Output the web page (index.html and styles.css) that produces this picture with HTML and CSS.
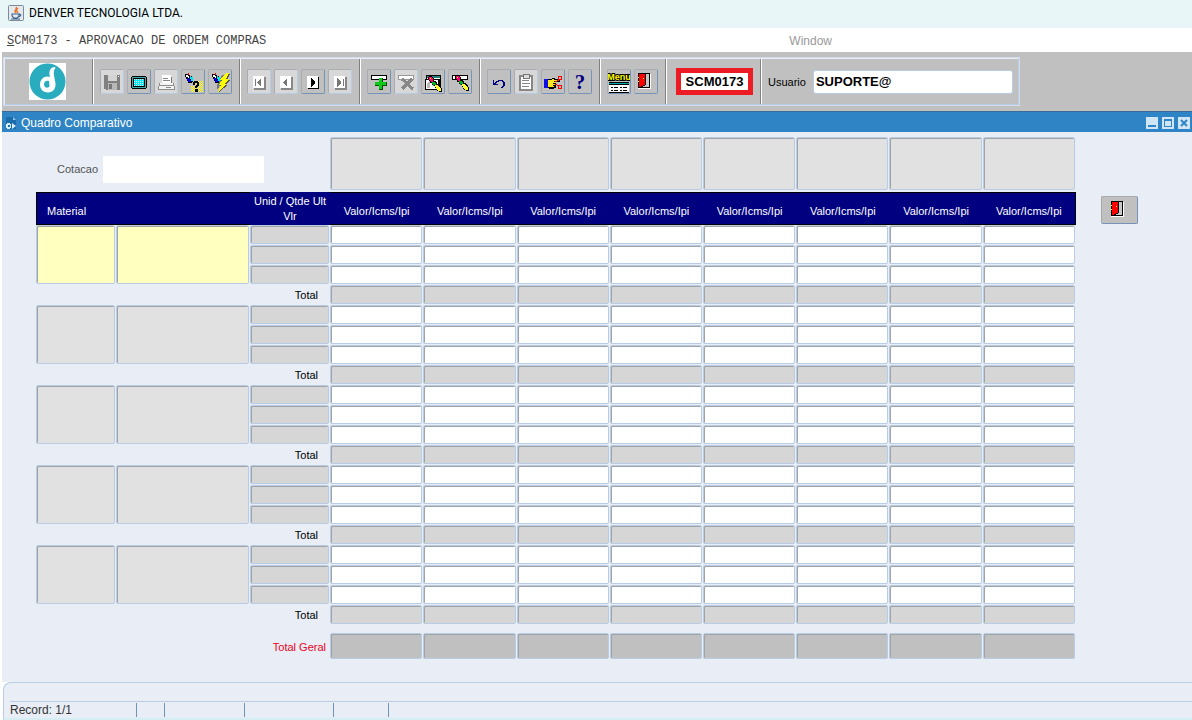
FILE: index.html
```html
<!DOCTYPE html>
<html lang="pt-BR">
<head>
    <meta charset="UTF-8">
    <meta name="viewport" content="width=device-width, initial-scale=1.0">
    <title>DENVER TECNOLOGIA LTDA.</title>
    <link rel="stylesheet" href="styles.css">
</head>
<body>

    <!-- shapes used by more than one button -->
    <svg class="defs" aria-hidden="true">
        <defs>
            <pattern id="cyanDots" width="2" height="2" patternUnits="userSpaceOnUse">
                <rect width="2" height="2" fill="#00e8f8"/><rect width="1" height="1" fill="#fff"/>
            </pattern>
            <pattern id="yellowDots" width="2" height="2" patternUnits="userSpaceOnUse">
                <rect width="1" height="1" fill="#ff0"/><rect x="1" y="1" width="1" height="1" fill="#ff0"/>
            </pattern>
            <g id="torch">
                <path d="M3 3h3v1h2v1h2v1h1v5h-1v1H6v-2H5V8H4V6H3z" fill="#000"/>
                <path d="M4 4h2v1h1v3H6V6H4z" fill="#fff"/>
                <path d="M6 2h1v2H6z" fill="red"/>
                <path d="M8 5h1v1h2v4H9V8H8z" fill="#00e8f8"/>
                <path d="M5 7h2v1h1v1h1v2H6V9H5z" fill="#0000e0"/>
            </g>
            <g id="page">
                <path d="M6 6h12v13H6z" fill="#888"/>
                <path d="M5 5h11v12H5z" fill="#fff"/>
            </g>
            <g id="pencil">
                <path d="M7 4h3v1h1v1h1v3h2v1h1v2h2v1h1v1h1v2h1v4h-3v-1h-2v-1h-1v-2h-1v-2h-2v-1h-1v-2H8V9H7V8H6V5h1z" fill="#000"/>
                <path d="M7 5h3v1h1v4H9V9H8V8H7z" fill="#ff0070"/>
                <path d="M8 6h1v1H8z" fill="#ff0"/>
                <path d="M10 10h3v1h1v2h-2v1h-1v-2h-1z" fill="#00b020"/>
                <path d="M13 13h3v1h1v1h1v1h1v3h-3v-1h-1v-1h-1v-2h-1z" fill="#ffff30"/>
            </g>
            <g id="door">
                <path d="M3 3h13v15H3z" fill="#fff"/>
                <path d="M3 2h12v15H3z" fill="#000"/>
                <path d="M11 3h3v13h-6v-1h2v-1h1z" fill="#c8c8c8"/>
                <path d="M4 3h6v11H8v1H6v1H4z" fill="red"/>
                <path d="M3 6h1v1H3zM3 10h1v1H3zM8 7h1v1H8z" fill="#ff0"/>
            </g>
        </defs>
    </svg>

    <header class="titlebar">
        <svg class="java" viewBox="0 0 16 16">
            <rect x=".5" y=".5" width="15" height="15" rx="1" fill="#e4e9ed" stroke="#7d8b98"/>
            <path d="M8 2c2 2-3 3 0 6M10 3c-2 2-2 2 0 5" fill="none" stroke="#e8772e" stroke-width="1.5"/>
            <path d="M4 9h7v1c0 2-1 2-2 3H6c-1-1-2-1-2-3zM11 9.500c3-.5 2 2-1 2.500M3 14h9" fill="none" stroke="#3c6590" stroke-width="1.2"/>
        </svg>
        <span>DENVER TECNOLOGIA LTDA.</span>
    </header>

    <nav class="menubar">
        <a href="#" class="menu-program"><u>S</u>CM0173 - APROVACAO DE ORDEM COMPRAS</a>
        <a href="#" class="menu-window">Window</a>
    </nav>

    <div class="toolbar">
        <div class="tools">
            <div class="group logo">
                <svg viewBox="0 0 37 37">
                    <rect width="37" height="37" fill="#fff"/>
                    <circle cx="18.500" cy="18.500" r="18" fill="#2aacbf"/>
                    <path d="M26 4c-4 0-6 3-5.500 8l.5 2c-5-2-10 2-10 7.500 0 5 3.500 8 8 8 5 0 8-4 7.500-9l-1.500-8c-.5-4 0-6 1.500-7.500z" fill="#fff"/>
                    <path d="M20 18c-3-1-5 1-5 3.500s2 3.500 4 3c2-.5 1.500-2 1.300-3.500z" fill="#2aacbf"/>
                </svg>
            </div>
            <div class="group">
                <button type="button" class="off" title="Salvar"><svg viewBox="0 0 22 22">
                    <path d="M3 4h16v15H5v-1H3z" fill="#808080"/><path d="M7 4h9v6H7z" fill="#d4d4d4"/><path d="M7 12h9v7H7z" fill="#b8b8b8"/><path d="M8 13h3v5H8z" fill="#777"/><path d="M17 5h1v1h-1z" fill="#fff"/>
                </svg></button>
                <button type="button" title="Tela"><svg viewBox="0 0 22 22">
                    <path d="M4 5h14v1h1v11h-1v1H4v-1H3V6h1z" fill="#000"/><path d="M4 6h14v11H4z" fill="#40a8a8"/><path d="M5 7h12v9H5z" fill="#000"/><path d="M6 8h10v7H6z" fill="url(#cyanDots)"/>
                </svg></button>
                <button type="button" class="off" title="Imprimir"><svg viewBox="0 0 22 22">
                    <path d="M7 5h9v1h1v7H7z" fill="#777"/><path d="M7 4h9v8H7z" fill="#fff"/><path d="M8 7h5v1H8zM8 9h7v1H8z" fill="#888"/><path d="M4 12h15v3h1v4H3v-4h1z" fill="#8c8c8c"/><path d="M5 12h13v2H5zM4 15h15v3H4z" fill="#f4f4f4"/><path d="M11 16h5v1h-5z" fill="#888"/>
                </svg></button>
                <button type="button" title="Entrar consulta"><svg viewBox="0 0 22 22">
                    <use href="#torch"/><path d="M13 10h8v11H9v-6h4z" fill="url(#yellowDots)"/><path d="M11 11h1v-1h4v1h1v4h-1v1h-1v1h-2v-2h1v-1h1v-2h-2v2h-2zM13 18h3v3h-3z" fill="#000"/>
                </svg></button>
                <button type="button" title="Executar consulta"><svg viewBox="0 0 22 22">
                    <use href="#torch"/><path d="M13 4h2v2l-3 4h2l-6 9v-6H9z" fill="#777"/><path d="M18 3h3l-3 6h3l-4 5h2l-9 7 3-6h-2l3-5h-2z" fill="#555"/><path d="M17 2h3l-3 6h3l-4 5h2l-9 8 3-7h-2l3-5h-2z" fill="#ff0"/>
                </svg></button>
            </div>
            <div class="group">
                <button type="button" class="off" title="Primeiro"><svg viewBox="0 0 22 22"><use href="#page"/><path d="M7 8h1v7H7zM13 7v9l-4-4v-1z" fill="#777"/></svg></button>
                <button type="button" class="off" title="Anterior"><svg viewBox="0 0 22 22"><use href="#page"/><path d="M12 7v9l-4-4v-1z" fill="#777"/></svg></button>
                <button type="button" title="Proximo"><svg viewBox="0 0 22 22"><path d="M6 6h11v12H6z" fill="#000"/><path d="M5 5h11v12H5z" fill="#fff"/><path d="M9 7v9l4-4v-1z" fill="#000"/></svg></button>
                <button type="button" class="off" title="Ultimo"><svg viewBox="0 0 22 22"><use href="#page"/><path d="M8 7v9l4-4v-1zM14 8h1v7h-1z" fill="#777"/></svg></button>
            </div>
            <div class="group">
                <button type="button" title="Inserir"><svg viewBox="0 0 22 22">
                    <path d="M3 4h16v5H3z" fill="#000"/><path d="M4 5h14v3H4z" fill="#fff"/><path d="M11 7h4v4h4v4h-4v4h-4v-4H7v-4h4z" fill="#005000"/><path d="M11 7h3v4h4v3h-4v4h-3v-4H7v-3h4z" fill="#10c818"/>
                </svg></button>
                <button type="button" class="off" title="Excluir"><svg viewBox="0 0 22 22">
                    <path d="M3 4h16v5H3z" fill="#999"/><path d="M4 5h14v3H4z" fill="#fff"/><path d="M7 8l11 10M17 8L7 18" stroke="#888" stroke-width="3"/>
                </svg></button>
                <button type="button" title="Limpar tela"><svg viewBox="0 0 22 22">
                    <path d="M4 4h15v11H4z" fill="#000"/><path d="M5 5h13v2H5z" fill="#208080"/><path d="M5 7h13v1H5zM4 9h12v9H4z" fill="#fff"/><path d="M4 18h10v1H4zM3 8h16v1H3zM3 8h1v11H3z" fill="#000"/><path d="M5 12l3-2v7H5z" fill="#bbb"/><use href="#pencil" y="1"/>
                </svg></button>
                <button type="button" title="Limpar registro"><svg viewBox="0 0 22 22">
                    <path d="M3 4h16v5H3z" fill="#000"/><path d="M4 5h14v3H4z" fill="#fff"/><use href="#pencil"/>
                </svg></button>
            </div>
            <div class="group">
                <button type="button" title="Desfazer"><svg viewBox="0 0 22 22">
                    <path d="M5 9h1v3h1v-1h1v-1h2V9h5v1h1v1h1v4h-1v1h-1v1h-2v-1h1v-1h1v-4h-1v-1h-3v1H9v1H8v1h2v1H5z" fill="#000080"/>
                </svg></button>
                <button type="button" class="off" title="Area de transferencia"><svg viewBox="0 0 22 22">
                    <path d="M5 5h12v14H5z" fill="#fff" stroke="#888" stroke-width="2"/><path d="M8 3h6v4H8z" fill="#ddd" stroke="#777"/><path d="M7 9h7v1H7zM7 12h8v1H7zM7 15h7v1H7z" fill="#888"/>
                </svg></button>
                <button type="button" title="Lista de valores"><svg viewBox="0 0 22 22">
                    <path d="M6 8h4V7h3v1h5v3h-4v6h-2v1H7v-1H6z" fill="#000"/><path d="M2 8h4v9H2z" fill="#1010e0"/><path d="M6 9h4V8h2v1h5v1h-5v1h2v1h-3v1h2v1h-2v1h1v1H6z" fill="#ffe820"/><path d="M13 11l4-2M13 13l4 2" stroke="red"/><path d="M16 5h3v3h-3zM16 14h3v3h-3z" fill="none" stroke="red"/>
                </svg></button>
                <button type="button" title="Ajuda"><svg viewBox="0 0 22 22"><text class="help" x="11" y="18" text-anchor="middle">?</text></svg></button>
            </div>
            <div class="group">
                <button type="button" title="Menu"><svg viewBox="0 0 22 22">
                    <text class="menu-word" x="11" y="9" text-anchor="middle">Menu</text>
                    <path d="M1 11h20v11H1z" fill="#000"/><path d="M1 12h20v1H1z" fill="#00a8a8"/><path d="M1 14h20v7H1z" fill="#fff"/><path d="M3 16h2v1H3zM6 16h4v1H6zM12 16h2v1h-2zM15 16h4v1h-4zM3 19h2v1H3zM6 19h4v1H6zM12 19h2v1h-2zM15 19h4v1h-4z" fill="#000"/>
                </svg></button>
                <button type="button" title="Sair"><svg viewBox="0 0 22 22"><use href="#door"/></svg></button>
            </div>
            <div class="group program">
                <strong>SCM0173</strong>
            </div>
            <div class="group user">
                <label for="usuario">Usuario</label>
                <input type="text" id="usuario" value="SUPORTE@">
            </div>
        </div>
    </div>

    <div class="window-bar">
        <svg class="form-icon" viewBox="0 0 12 14">
            <path d="M1 1h7l3 3v9H1z" fill="#1c6cab"/><path d="M8 1l3 3H8z" fill="#8fc4ea"/>
            <path d="M2 7h3v1h1v4H5v1H2v-1H1V8h1zM7 7l4 3-4 3z" fill="#d8ecfa"/><path d="M3 9h2v2H3z" fill="#1c6cab"/>
        </svg>
        <h1>Quadro Comparativo</h1>
        <button type="button" title="Minimizar"><svg viewBox="0 0 12 12"><path d="M2 8h8v2H2z" fill="#2e84c4"/></svg></button>
        <button type="button" title="Maximizar"><svg viewBox="0 0 12 12"><path d="M2 2h8v8H2zM3 4v5h6V4z" fill="#2e84c4" fill-rule="evenodd"/></svg></button>
        <button type="button" title="Fechar"><svg viewBox="0 0 12 12"><path d="M3 3l6 6M9 3L3 9" stroke="#2e84c4" stroke-width="2"/></svg></button>
    </div>

    <main class="content">
        <table class="quadro">
            <colgroup>
                <col class="col-code"><col class="col-name"><col class="col-unit">
                <col><col><col><col><col><col><col><col>
            </colgroup>
            <thead>
                <tr id="fornecedores">
                    <td colspan="3">
                        <div class="cotacao">
                            <label for="cotacao">Cotacao</label>
                            <input type="text" id="cotacao">
                        </div>
                    </td>
                </tr>
                <tr class="titles" id="titulos">
                    <th class="material" colspan="2">Material</th>
                    <th class="unit">Unid / Qtde Ult Vlr</th>
                </tr>
            </thead>
            <tbody id="itens"></tbody>
            <tfoot>
                <tr class="geral" id="totalGeral">
                    <th colspan="3">Total Geral</th>
                </tr>
            </tfoot>
        </table>
        <button type="button" class="exit" title="Sair"><svg viewBox="0 0 22 22"><use href="#door"/></svg></button>
    </main>

    <footer class="status">
        <div class="status-line">
            <span class="record">Record: 1/1</span>
            <span class="s1"></span>
            <span class="s2"></span>
            <span class="s3"></span>
            <span class="s4"></span>
            <span class="s5"></span>
        </div>
    </footer>

    <script>
        const FORNECEDORES = 8;
        const ITENS = 5;

        function campos(tipo, nome) {
            let html = '';
            for (let f = 1; f <= FORNECEDORES; f++) {
                html += `<td><input type="text" class="field ${tipo}" aria-label="${nome} ${f}"></td>`;
            }
            return html;
        }

        document.getElementById('fornecedores').innerHTML += campos('supplier', 'Fornecedor');
        document.getElementById('titulos').innerHTML += '<th>Valor/Icms/Ipi</th>'.repeat(FORNECEDORES);
        document.getElementById('totalGeral').innerHTML += campos('grand', 'Total geral');

        let linhas = '';
        for (let i = 0; i < ITENS; i++) {
            const atual = i === 0 ? 'current' : '';
            for (let n = 0; n < 3; n++) {
                linhas += '<tr>';
                if (n === 0) {
                    linhas += `<td rowspan="3"><textarea class="field tall ${atual}" aria-label="Codigo"></textarea></td>`;
                    linhas += `<td rowspan="3"><textarea class="field tall ${atual}" aria-label="Material"></textarea></td>`;
                }
                linhas += '<td><input type="text" class="field locked" aria-label="Unidade"></td>';
                linhas += campos('', 'Valor') + '</tr>';
            }
            linhas += '<tr class="total"><th colspan="3">Total</th>' + campos('locked', 'Total') + '</tr>';
        }
        document.getElementById('itens').innerHTML = linhas;
    </script>
</body>
</html>
```
FILE: styles.css
```css
* {
    box-sizing: border-box;
}

body {
    margin: 0;
    min-height: 100vh;
    display: flex;
    flex-direction: column;
    font-family: "Liberation Sans", Arial, sans-serif;
    font-size: 11px;
    color: #000;
    background-color: #fff;
}

button, input, textarea {
    font-family: inherit;
    margin: 0;
    padding: 0;
}

svg {
    display: block;
}

.defs {
    position: absolute;
    width: 0;
    height: 0;
}

/* title and menu */
.titlebar {
    display: flex;
    align-items: center;
    gap: 5px;
    height: 28px;
    padding: 0 8px 3px;
    background-color: #e8f6f8;
    font-family: Roboto, "Noto Sans", sans-serif;
    font-size: 12px;
}

.java {
    width: 16px;
    height: 16px;
}

.menubar {
    display: flex;
    align-items: center;
    justify-content: space-between;
    height: 24px;
    padding: 2px 360px 0 7px;
    font-size: 12px;
}

.menubar a {
    text-decoration: none;
}

.menu-program {
    font-family: "Liberation Mono", "Courier New", monospace;
    color: #444;
}

.menu-window {
    color: #999;
}

/* toolbar */
.toolbar {
    margin-left: 2px;
    padding: 6px 2px;
    background-color: #c0c0c0;
}

.tools {
    display: flex;
    width: fit-content;
    height: 47px;
    border: 1px solid #b8cce4;
    border-top-color: #e4eefa;
    border-left-color: #e4eefa;
    box-shadow: 0 0 0 1px #d0dcec;
}

.group {
    display: flex;
    align-items: center;
    gap: 3px;
    padding: 0 7px;
    border-left: 1px solid #808080;
    box-shadow: inset 1px 0 #fff;
}

.group button {
    width: 24px;
    height: 25px;
    background-color: #c0c0c0;
    border: 1px solid #a8acb4;
    border-right-color: #7394b8;
    border-bottom-color: #7394b8;
    border-radius: 2px;
}

.group button.off {
    background-color: #d8d8d8;
    border-right-color: #b8cce4;
    border-bottom-color: #b8cce4;
}

.group svg {
    width: 22px;
    height: 22px;
    shape-rendering: crispEdges;
}

.logo {
    width: 87px;
    padding-left: 24px;
    border-left: none;
    box-shadow: none;
}

.logo svg {
    width: 37px;
    height: 37px;
    shape-rendering: auto;
}

.help {
    font-family: "Liberation Serif", serif;
    font-size: 21px;
    font-weight: bold;
    fill: #000080;
}

.menu-word {
    font-size: 9px;
    font-weight: bold;
    fill: #ff0;
    stroke: #000;
    stroke-width: 2px;
    paint-order: stroke;
}

.program {
    padding: 0 7px 0 10px;
}

.program strong {
    width: 77px;
    border: 5px solid #ed1c24;
    background-color: #fff;
    font-size: 13px;
    line-height: 17px;
    text-align: center;
}

.user {
    gap: 7px;
    padding-right: 5px;
}

.user input {
    width: 200px;
    height: 24px;
    padding: 0 2px;
    border: 1px solid #b8cce4;
    border-radius: 3px;
    background-color: #fff;
    font-size: 13px;
    font-weight: bold;
}

/* inner window */
.window-bar {
    display: flex;
    align-items: center;
    gap: 4px;
    height: 21px;
    margin-left: 2px;
    padding: 1px 2px 0 3px;
    border-top: 1px solid #3a6a98;
    background-color: #2e84c4;
    color: #fff;
}

.window-bar h1 {
    flex: 1;
    margin: 0;
    font-size: 12px;
    font-weight: normal;
}

.form-icon {
    width: 12px;
    height: 14px;
}

.window-bar button {
    width: 12px;
    height: 12px;
    border: none;
    background-color: #d0e6f6;
}

.content {
    display: flex;
    align-items: flex-start;
    gap: 25px;
    flex: 1;
    margin-left: 2px;
    padding: 5px 54px 22px 34px;
    background-color: #e8edf6;
}

.exit {
    width: 37px;
    height: 28px;
    margin-top: 59px;
    padding: 0 6px;
    border: 1px solid #a8a8a8;
    border-right-color: #7394b8;
    border-bottom-color: #7394b8;
    border-radius: 2px;
    background-color: #c0c0c0;
}

.exit svg {
    width: 22px;
    height: 22px;
    shape-rendering: crispEdges;
}

/* comparison table */
.quadro {
    flex: 1;
    width: 100%;
    table-layout: fixed;
    border-spacing: 0;
}

.col-code, .col-unit {
    width: 80px;
}

.col-name {
    width: 134px;
}

.quadro td {
    padding: 0 1px 1px 0;
}

.quadro th {
    padding: 0;
    font-weight: normal;
}

.cotacao {
    display: flex;
    align-items: center;
    justify-content: flex-end;
    gap: 5px;
    padding: 10px 65px 0 0;
    color: #555;
}

.cotacao input {
    width: 161px;
    height: 27px;
    border: none;
    background-color: #fff;
}

.titles th {
    height: 33px;
    padding-top: 5px;
    border: solid #000;
    border-width: 1px 0;
    background-color: #000080;
    color: #fff;
}

.titles .material {
    padding-left: 10px;
    border-left-width: 1px;
    text-align: left;
}

.titles .unit {
    padding: 1px 0 0;
    border-color: #000080;
    line-height: 15px;
}

.titles th:last-child {
    border-right-width: 1px;
}

.field {
    display: block;
    width: 100%;
    height: 19px;
    padding: 0 3px;
    border: 1px solid #b8cce4;
    border-radius: 2px;
    box-shadow: inset 1px 1px #a0a4a8;
    background-color: #fff;
    font-size: 11px;
    resize: none;
}

.field.supplier {
    height: 53px;
    margin-bottom: 1px;
    background-color: #e1e1e1;
}

.field.tall {
    height: 59px;
    background-color: #e1e1e1;
}

.field.current {
    background-color: #ffffc0;
}

.field.locked {
    background-color: #d6d6d6;
}

.field.grand {
    height: 26px;
    background-color: #c0c0c0;
}

.total th {
    padding-right: 12px;
    text-align: right;
}

.geral td {
    padding-top: 8px;
}

.geral th {
    padding: 9px 4px 0 0;
    color: #f00020;
    text-align: right;
}

/* status bar */
.status {
    height: 39px;
    margin-left: 3px;
    padding: 18px 0 0 6px;
    border: 1px solid #b8cce4;
    border-right: none;
    border-bottom: 3px solid #d4eef4;
    border-radius: 8px 0 0 0;
    background-color: #e8edf6;
}

.status-line {
    display: flex;
    align-items: center;
    height: 17px;
    border-top: 1px solid #b8cce4;
    color: #333;
    font-size: 12px;
}

.status-line span {
    height: 14px;
    border-right: 1px solid #6f93b5;
}

.status-line .record {
    width: 127px;
}

.s1 {
    width: 28px;
}

.s2 {
    width: 80px;
}

.s3 {
    width: 89px;
}

.s4 {
    width: 55px;
}

.status-line .s5 {
    flex: 1;
    border-right: none;
}
```
